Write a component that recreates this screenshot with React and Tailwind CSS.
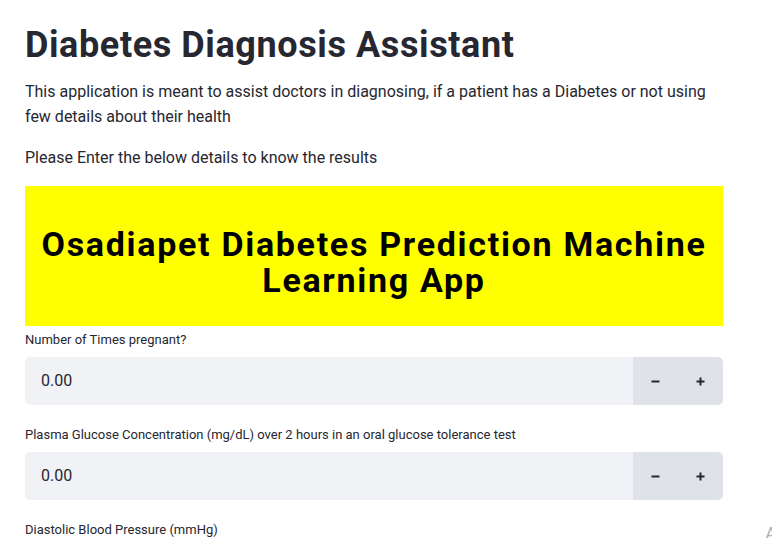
function Minus() {
  return (
    <svg width="9" height="9" viewBox="0 0 9 9" className="block">
      <path d="M0.5 4.5H8.5" stroke="#262730" strokeWidth="2" />
    </svg>
  );
}
function Plus() {
  return (
    <svg width="9" height="9" viewBox="0 0 9 9" className="block">
      <path d="M0.5 4.5H8.5M4.5 0.5V8.5" stroke="#262730" strokeWidth="2" />
    </svg>
  );
}

function NumberInput({ label }) {
  return (
    <div className="flex flex-col">
      <label className="text-[13px] leading-[18px] text-[#262730] mb-[8px]">{label}</label>
      <div className="flex h-[48px] rounded-[5px] overflow-hidden">
        <div className="flex-1 bg-[#f0f2f6] flex items-center pl-[16px] text-[16px] text-[#262730]">0.00</div>
        <div className="flex bg-[#dfe2e9]">
          <button className="w-[45px] flex items-center justify-center"><Minus /></button>
          <button className="w-[45px] flex items-center justify-center"><Plus /></button>
        </div>
      </div>
    </div>
  );
}

export default function App() {
  return (
    <div className="relative w-[772px] h-[538px] overflow-hidden bg-white" style={{ fontFamily: "Roboto, 'Liberation Sans', sans-serif" }}>
      <div className="ml-[25px] w-[698px] text-[#262730]">
        <h1 className="text-[36px] font-bold leading-[46px] pt-[22px] tracking-[0.6px]">Diabetes Diagnosis Assistant</h1>
        <p className="text-[16px] leading-[25px] mt-[11px]">
          This application is meant to assist doctors in diagnosing, if a patient has a Diabetes or not using few details about their health
        </p>
        <p className="text-[16px] leading-[25px] mt-[16px]">Please Enter the below details to know the results</p>
        <div className="mt-[16px] bg-[#ffff00] h-[140px] pt-[40px] text-center">
          <h2 className="text-[34px] font-bold leading-[36px] text-black tracking-[1.7px]">Osadiapet Diabetes Prediction Machine Learning App</h2>
        </div>
        <div className="mt-[5px] flex flex-col gap-[21px]">
          <NumberInput label="Number of Times pregnant?" />
          <NumberInput label="Plasma Glucose Concentration (mg/dL) over 2 hours in an oral glucose tolerance test" />
          <NumberInput label="Diastolic Blood Pressure (mmHg)" />
        </div>
      </div>
      <span className="absolute left-[765px] top-[520px] text-[18px] text-[#b0b0b0]">A</span>
    </div>
  );
}
